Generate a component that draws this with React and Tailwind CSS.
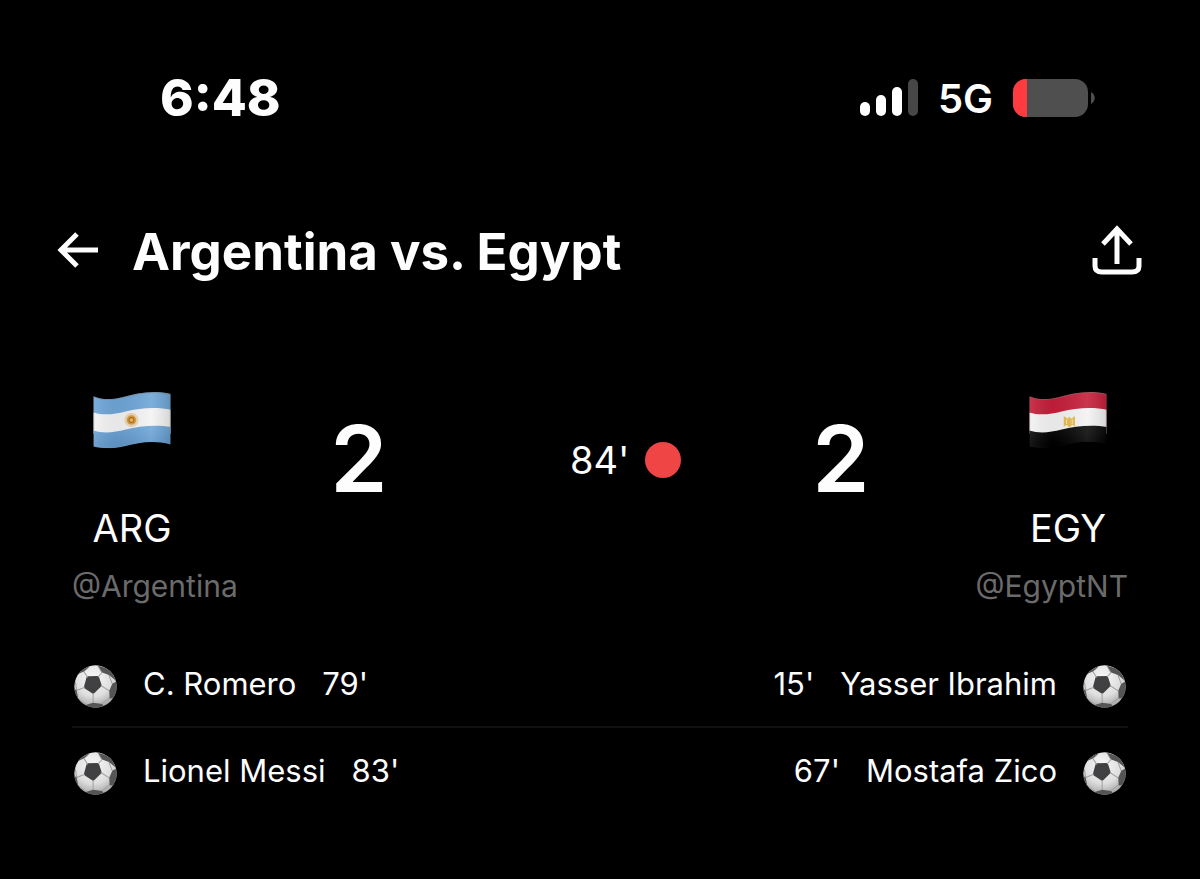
const FLAG_BODY = "M45 50C70 61 98 61 130 53C175 42 220 31 272 44V192C220 178 180 187 140 196C105 204 75 205 45 198Z";

function Flag({ id, label, top, bottom, bottomEnd, children }) {
  return (
    <svg role="img" aria-label={label} viewBox="44 36 229 168" className="h-[58px] w-[78px]">
      <defs>
        <clipPath id={id}><path d={FLAG_BODY} /></clipPath>
        <linearGradient id={id + "-shade"} x1="0" x2="1">
          <stop offset="0" stopColor="#fff" stopOpacity=".1" />
          <stop offset=".3" stopColor="#000" stopOpacity=".05" />
          <stop offset=".75" stopColor="#fff" stopOpacity=".1" />
          <stop offset="1" stopColor="#000" stopOpacity=".12" />
        </linearGradient>
        <linearGradient id={id + "-bottom"} x1="0" x2="0" y1="0" y2="1">
          <stop offset=".1" stopColor={bottom} />
          <stop offset=".7" stopColor={bottomEnd} />
        </linearGradient>
      </defs>
      <g clipPath={"url(#" + id + ")"}>
        <path d="M44 30H274V141L44 151Z" fill={top} />
        <path d="M44 98C75 107 105 104 140 95C180 85 230 80 274 90V160H44Z" fill="#f4f3f4" />
        <path d="M44 151C75 160 105 157 140 148C180 138 230 133 274 141V210H44Z" fill={"url(#" + id + "-bottom)"} />
        {children}
        <path d={FLAG_BODY} fill={"url(#" + id + "-shade)"} />
        <path d="M45 151V50C70 61 98 61 130 53C175 42 220 31 272 44V141" fill="none" stroke="#777" strokeOpacity=".5" strokeWidth="5" />
      </g>
    </svg>
  );
}

function ArgentinaFlag() {
  return (
    <Flag id="flag-arg" label="Flag of Argentina" top="#6fa6d8" bottom="#6fa6d8" bottomEnd="#6398ca">
      <circle cx="157" cy="120" r="21" fill="#e5c9a0" opacity=".7" />
      <circle cx="157" cy="120" r="14" fill="#d99a35" />
      <circle cx="157" cy="120" r="7" fill="#efb94e" stroke="#a86b26" strokeWidth="3" />
    </Flag>
  );
}

function EgyptFlag() {
  return (
    <Flag id="flag-egy" label="Flag of Egypt" top="#c51f3a" bottom="#0c0c0c" bottomEnd="#000">
      <path d="M146 108l12 8 4-6 5 6 12-8v32l-8-6-9 8-8-8-8 6z" fill="#e8bd50" />
      <path d="M154 118v14M171 118v14" stroke="#f6e3b0" strokeWidth="3" />
    </Flag>
  );
}

function Ball({ id }) {
  return (
    <svg role="img" aria-label="Goal" viewBox="0 0 128 128" className="mt-1 size-[43px] shrink-0">
      <defs>
        <clipPath id={id}><circle cx="64" cy="64" r="63" /></clipPath>
        <radialGradient id={id + "-light"} cx=".45" cy=".3" r=".72">
          <stop offset="0" stopColor="#f8f8f8" />
          <stop offset=".6" stopColor="#dedede" />
          <stop offset="1" stopColor="#a0a0a0" />
        </radialGradient>
      </defs>
      <g clipPath={"url(#" + id + ")"}>
        <rect width="128" height="128" fill={"url(#" + id + "-light)"} />
        <path d="M41 37L71 36L79 61L57 82L33 66Z" fill="#414143" stroke="#414143" strokeWidth="7" strokeLinejoin="round" />
        <path d="M41 37L29 19M71 36L83 23M80 61L105 77M57 83L57 112M32 66L8 76M29 19L44 6M83 23L72 3M104 30L114 56M82 116L106 98M36 118L12 100M8 76L4 50" stroke="#a0a0a0" strokeWidth="3" fill="none" />
        <path d="M72 2L84 22L104 30L124 46L112 14ZM105 77L114 56L128 48V98L106 100ZM32 120L57 112L84 116L92 128H30ZM0 70L8 76L13 102L0 98ZM22 12L34 2L44 6L29 19L14 26Z" fill="#555557" />
      </g>
    </svg>
  );
}

function StatusBar() {
  return (
    <div className="flex h-10 items-center justify-between pl-40 pr-[105px] font-[Inter,sans-serif]">
      <time className="text-[51px] font-extrabold">6:48</time>
      <div className="flex items-center gap-5">
        <svg role="img" aria-label="Signal: 3 of 4 bars" viewBox="0 0 58 38" className="h-[38px] w-[58px]">
          <rect y="23" width="10" height="14" rx="5" fill="#fff" />
          <rect x="16" y="16" width="10" height="21" rx="5" fill="#fff" />
          <rect x="32" y="8" width="10" height="29" rx="5" fill="#fff" />
          <rect x="48" width="10" height="37" rx="5" fill="#474747" />
        </svg>
        <span className="pt-[2px] text-[40px] font-semibold">5G</span>
        <svg role="img" aria-label="Battery low" viewBox="0 0 82 40" className="h-10 w-[82px]">
          <clipPath id="battery"><rect y="1" width="75" height="38" rx="13" /></clipPath>
          <g clipPath="url(#battery)">
            <rect width="75" height="40" fill="#4f4f4f" />
            <rect width="14" height="40" fill="#ff3b3f" />
          </g>
          <path d="M78 14C83 17 83 23 78 26Z" fill="#4f4f4f" />
        </svg>
      </div>
    </div>
  );
}

function Team({ code, children }) {
  return (
    <div className="flex w-[120px] flex-col items-center">
      <div className="flex h-[104px] items-center">{children}</div>
      <span className="mt-8 text-[38px] leading-[48px]">{code}</span>
    </div>
  );
}

function Score({ value }) {
  return <strong className="flex-1 pb-[2px] text-center text-[92px] leading-none font-semibold">{value}</strong>;
}

const GOALS = [
  { home: ["C. Romero", "79'"], away: ["Yasser Ibrahim", "15'"] },
  { home: ["Lionel Messi", "83'"], away: ["Mostafa Zico", "67'"] },
];

export default function App() {
  return (
    <div className="min-h-screen bg-black pt-[78px] pb-16 font-[Inter,sans-serif] text-[#fdfdfd]">
      <StatusBar />
      <header className="mt-[100px] flex h-16 items-center pr-14 pl-14">
        <button aria-label="Back" className="mr-8">
          <svg viewBox="0 0 44 40" className="h-10 w-11" fill="none" stroke="currentColor" strokeWidth="5">
            <path d="M42 20H5M21 4L5 20L21 36" />
          </svg>
        </button>
        <h1 className="flex-1 pt-1 text-[51px] leading-[64px] font-bold">Argentina vs. Egypt</h1>
        <button aria-label="Share">
          <svg viewBox="0 0 54 54" className="size-[54px]" fill="none" stroke="currentColor" strokeWidth="5">
            <path d="M27 41V6M13 21L27 6L41 21M5 35V43Q5 49 12 49H42Q49 49 49 43V35" />
          </svg>
        </button>
      </header>
      <main className="mt-[86px] px-[72px]">
        <section aria-label="Score" className="flex items-center">
          <Team code="ARG"><ArgentinaFlag /></Team>
          <Score value="2" />
          <div className="flex w-[148px] items-center gap-4 pl-11">
            <span className="text-[38px] leading-[48px]">84'</span>
            <span role="img" aria-label="Live" className="size-9 shrink-0 rounded-full bg-[#f04545]" />
          </div>
          <Score value="2" />
          <Team code="EGY"><EgyptFlag /></Team>
        </section>
        <div className="mt-[14px] flex justify-between text-[30px] leading-10 text-[#6b6b6b]">
          <a href="#argentina">@Argentina</a>
          <a href="#egypt">@EgyptNT</a>
        </div>
        <ul className="mt-9 divide-y-2 divide-[#101010] text-[31px] leading-10">
          {GOALS.map(({ home, away }, i) => (
            <li key={home[0]} className="flex h-[86px] items-center justify-between px-[2px]">
              <div className="flex items-center gap-[26px]">
                <Ball id={"home-" + i} />
                <span>{home[0]}</span>
                <span>{home[1]}</span>
              </div>
              <div className="flex items-center gap-[26px]">
                <span>{away[1]}</span>
                <span>{away[0]}</span>
                <Ball id={"away-" + i} />
              </div>
            </li>
          ))}
        </ul>
      </main>
    </div>
  );
}
